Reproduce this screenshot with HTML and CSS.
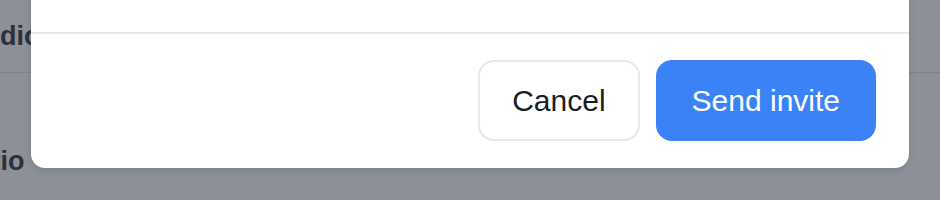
FILE: index.html
```html
<!DOCTYPE html>
<html lang="en">
<head>
<meta charset="utf-8">
<title>Invite</title>
<link rel="stylesheet" href="styles.css">
</head>
<body>
  <main class="page">
    <div class="row row-first"><span class="label label-a">Audio</span></div>
    <div class="row row-second"><span class="label label-b">Ratio</span></div>
  </main>
  <div class="overlay">
    <div class="modal">
      <div class="modal-body"></div>
      <div class="modal-footer">
        <button class="btn btn-secondary" type="button">Cancel</button>
        <button class="btn btn-primary" type="button">Send invite</button>
      </div>
    </div>
  </div>
</body>
</html>
```

FILE: styles.css
```css
html, body {
  margin: 0;
  padding: 0;
}
body {
  width: 940px;
  height: 200px;
  overflow: hidden;
  background: #8c9098;
  font-family: "Liberation Sans", Arial, sans-serif;
  position: relative;
}
.page {
  display: flex;
  flex-direction: column;
}
.row {
  height: 32px;
  line-height: 32px;
  font-size: 27px;
  font-weight: 700;
  color: #2c313a;
  white-space: nowrap;
}
.row-first {
  padding: 20px 0 20px;
  border-bottom: 1px solid #7f838b;
}
.row-second {
  padding: 72px 0 20px;
}
.label-a {
  margin-left: -36px;
}
.label-b {
  margin-left: -43px;
}
.overlay {
  position: absolute;
  left: 31px;
  right: 31px;
  bottom: 32px;
}
.modal {
  background: #ffffff;
  border-radius: 14px;
  box-shadow: 0 2px 6px rgba(0, 0, 0, 0.12);
  overflow: hidden;
}
.modal-body {
  height: 60px;
  border-bottom: 2px solid #e5e7eb;
}
.modal-footer {
  display: flex;
  justify-content: flex-end;
  gap: 16px;
  padding: 26px 33px 27px;
}
.btn {
  height: 81px;
  border-radius: 16px;
  font-family: "Liberation Sans", Arial, sans-serif;
  font-size: 30px;
  padding: 0 32px;
  border: 2px solid transparent;
  cursor: pointer;
}
.btn-secondary {
  background: #ffffff;
  border-color: #e5e7eb;
  color: #1a1d24;
}
.btn-primary {
  background: #3b82f6;
  color: #ffffff;
  padding: 0 34px;
}
```
